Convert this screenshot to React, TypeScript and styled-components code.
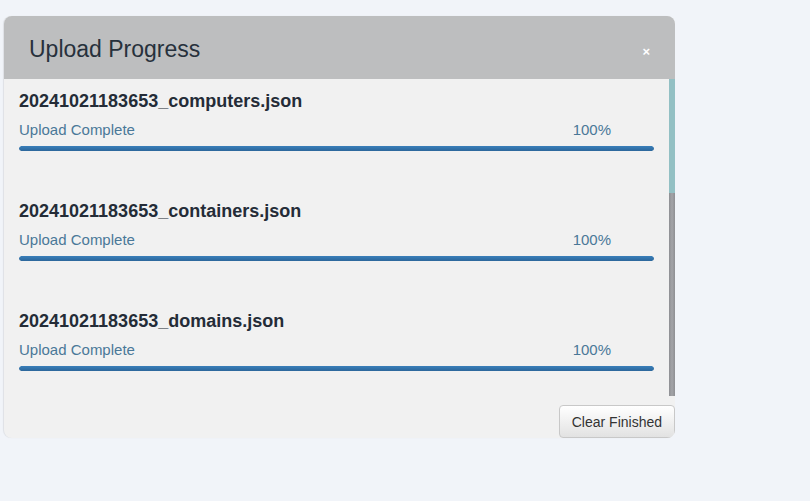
import React from "react";
import styled, { createGlobalStyle } from "styled-components";

const Global = createGlobalStyle`
  html, body { margin: 0; padding: 0; background: #f1f4f9; }
  body { font-family: "Liberation Sans", Arial, sans-serif; }
  * { box-sizing: border-box; }
`;

const Page = styled.div`
  padding: 16px 0 0 4px;
  min-height: 501px;
`;

const Modal = styled.div`
  width: 671px;
  border-radius: 8px;
  overflow: hidden;
  background: #f1f1f1;
  box-shadow: -1px 0 1px rgba(0, 0, 0, 0.08);
  display: flex;
  flex-direction: column;
`;

const Header = styled.div`
  height: 63px;
  background: #bdbebf;
  display: flex;
  align-items: center;
  justify-content: space-between;
  padding: 0 25px 0 25px;
`;

const Title = styled.h3`
  margin: 0;
  font-size: 23px;
  font-weight: 400;
  color: #27313c;
  line-height: 28px;
  padding-top: 2px;
`;

const Close = styled.button`
  border: 0;
  background: none;
  padding: 0;
  color: #ffffff;
  font-family: "Liberation Sans", Arial, sans-serif;
  font-size: 13px;
  font-weight: 700;
  line-height: 1;
  cursor: pointer;
  margin-top: 8px;
`;

const BodyWrap = styled.div`
  height: 317px;
  display: flex;
`;

const Body = styled.div`
  flex: 1;
  min-width: 0;
  overflow: hidden;
`;

const Rail = styled.div`
  width: 6px;
  flex: none;
  display: flex;
  flex-direction: column;
  background: linear-gradient(to right, #8e8f93, #a3a4a8 50%, #8e8f93);
`;

const Thumb = styled.div`
  background: #93c0c4;
`;

const Row = styled.div`
  padding: 12px 15px 38px;
`;

const FileName = styled.h4`
  margin: 0;
  font-size: 18px;
  line-height: 20px;
  font-weight: 700;
  color: #242c37;
`;

const StatusLine = styled.div`
  margin-top: 9px;
  display: flex;
  justify-content: space-between;
  padding-right: 43px;
  font-size: 15px;
  line-height: 20px;
  color: #4a7898;
`;

const Track = styled.div`
  margin-top: 6px;
  height: 5px;
  border-radius: 3px;
  background: #e4e4e4;
  overflow: hidden;
`;

const Fill = styled.div`
  height: 100%;
  border-radius: 3px;
  background: linear-gradient(to bottom, #3a7fba, #2c679b);
`;

const Footer = styled.div`
  height: 42px;
  display: flex;
  justify-content: flex-end;
  align-items: flex-end;
`;

const Button = styled.button`
  height: 33px;
  padding: 0 12px;
  font-family: "Liberation Sans", Arial, sans-serif;
  font-size: 14px;
  color: #333;
  background: linear-gradient(to bottom, #ffffff, #e2e2e2);
  border: 1px solid #c8c8c8;
  border-radius: 4px;
  cursor: pointer;
`;

const files = ["computers", "containers", "domains"];

export default function App() {
  const visible = 317;
  const total = 880;
  return (
    <Page>
      <Global />
      <Modal>
        <Header>
          <Title>Upload Progress</Title>
          <Close aria-label="Close">×</Close>
        </Header>
        <BodyWrap>
          <Body>
            {files.map((f) => {
              const pct = 100;
              return (
                <Row key={f}>
                  <FileName>20241021183653_{f}.json</FileName>
                  <StatusLine>
                    <span>Upload Complete</span>
                    <span>{pct}%</span>
                  </StatusLine>
                  <Track>
                    <Fill style={{ width: `${pct}%` }} />
                  </Track>
                </Row>
              );
            })}
          </Body>
          <Rail>
            <Thumb style={{ height: `${Math.round((visible * visible) / total)}px` }} />
          </Rail>
        </BodyWrap>
        <Footer>
          <Button>Clear Finished</Button>
        </Footer>
      </Modal>
    </Page>
  );
}
